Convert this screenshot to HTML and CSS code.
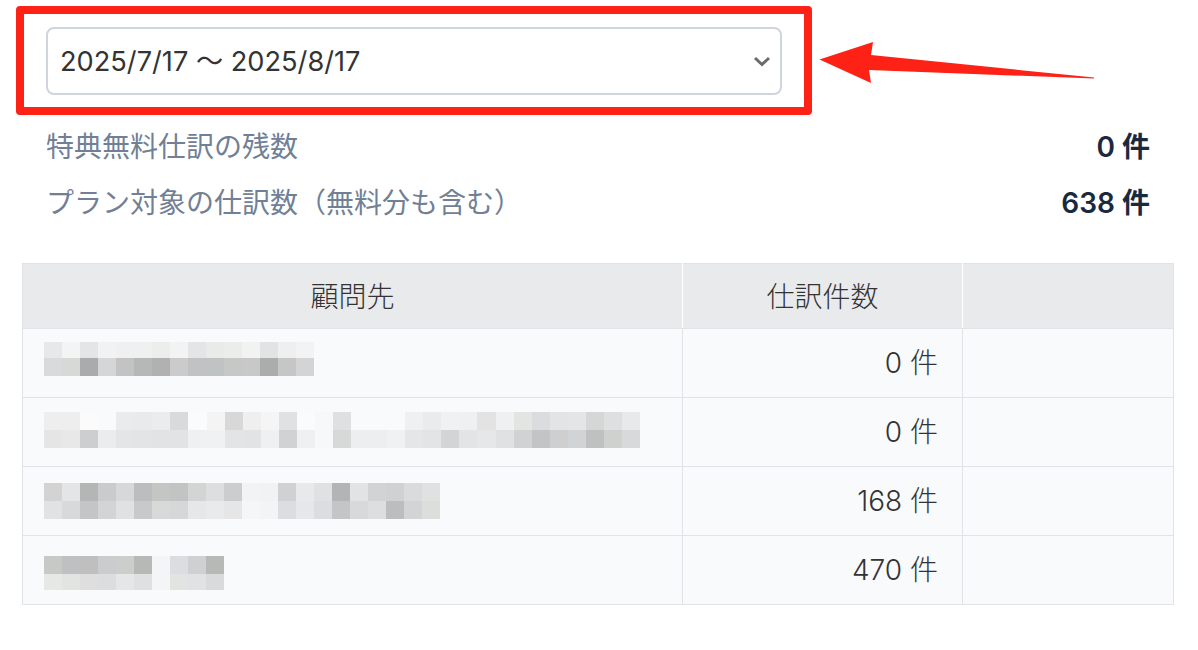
FILE: index.html
```html
<!DOCTYPE html>
<html lang="ja">
<head>
  <meta charset="UTF-8" />
  <meta name="viewport" content="width=device-width, initial-scale=1.0"/>
  <title>仕訳数</title>
  <link rel="stylesheet" href="styles.css">
</head>
<body>
  <div class="page">
    <div class="period">
      <select class="period-select">
        <option>2025/7/17 〜 2025/8/17</option>
      </select>
      <svg class="chevron" width="18" height="12" viewBox="0 0 18 12">
        <path d="M2 3 L9 9.5 L16 3" fill="none" stroke="#6b6b6b" stroke-width="3"/>
      </svg>
    </div>

    <div class="stats">
      <div class="stat">
        <span class="stat-label">特典無料仕訳の残数</span>
        <span class="stat-value">0 件</span>
      </div>
      <div class="stat">
        <span class="stat-label">プラン対象の仕訳数（無料分も含む）</span>
        <span class="stat-value">638 件</span>
      </div>
    </div>

    <table class="clients">
      <thead>
        <tr>
          <th class="col-name">顧問先</th>
          <th class="col-count">仕訳件数</th>
          <th></th>
        </tr>
      </thead>
      <tbody>
        <tr>
          <td class="name-cell">
            <svg class="mosaic mosaic-first" width="270" height="34" viewBox="0 0.11 15 1.89" preserveAspectRatio="none" shape-rendering="crispEdges">
              <rect x="0" y="0" width="1" height="1" fill="#e8e8e9"/><rect x="1" y="0" width="1" height="1" fill="#f4f4f5"/><rect x="2" y="0" width="1" height="1" fill="#e4e5e7"/><rect x="3" y="0" width="1" height="1" fill="#f2f2f3"/><rect x="4" y="0" width="1" height="1" fill="#f0f0f1"/><rect x="5" y="0" width="1" height="1" fill="#f0f0f1"/><rect x="6" y="0" width="1" height="1" fill="#eceeec"/><rect x="7" y="0" width="1" height="1" fill="#f3f3f4"/><rect x="8" y="0" width="1" height="1" fill="#e4e5e7"/><rect x="9" y="0" width="1" height="1" fill="#e9ebe9"/><rect x="10" y="0" width="1" height="1" fill="#ebedeb"/><rect x="11" y="0" width="1" height="1" fill="#f2f2f3"/><rect x="12" y="0" width="1" height="1" fill="#e2e3e5"/><rect x="13" y="0" width="1" height="1" fill="#efeff0"/><rect x="14" y="0" width="1" height="1" fill="#f3f3f4"/>
              <rect x="0" y="1" width="1" height="1" fill="#d9dadc"/><rect x="1" y="1" width="1" height="1" fill="#d6d9d6"/><rect x="2" y="1" width="1" height="1" fill="#a9abad"/><rect x="3" y="1" width="1" height="1" fill="#d5d6d8"/><rect x="4" y="1" width="1" height="1" fill="#c3c3c3"/><rect x="5" y="1" width="1" height="1" fill="#b5b8b7"/><rect x="6" y="1" width="1" height="1" fill="#b0b1b0"/><rect x="7" y="1" width="1" height="1" fill="#cbcbcb"/><rect x="8" y="1" width="1" height="1" fill="#c0c2c3"/><rect x="9" y="1" width="1" height="1" fill="#c0c3c3"/><rect x="10" y="1" width="1" height="1" fill="#c6c7c7"/><rect x="11" y="1" width="1" height="1" fill="#c8c8c8"/><rect x="12" y="1" width="1" height="1" fill="#abadac"/><rect x="13" y="1" width="1" height="1" fill="#c6c6c6"/><rect x="14" y="1" width="1" height="1" fill="#d3d4d6"/>
            </svg>
          </td>
          <td class="count">0 件</td>
          <td></td>
        </tr>
        <tr>
          <td class="name-cell">
            <svg class="mosaic mosaic-second" width="596" height="36" viewBox="0 0 33 2" preserveAspectRatio="none" shape-rendering="crispEdges">
              <rect x="0" y="0" width="1" height="1" fill="#eeeeef"/><rect x="1" y="0" width="1" height="1" fill="#eeeeef"/><rect x="2" y="0" width="1" height="1" fill="#fbfbfc"/><rect x="3" y="0" width="1" height="1" fill="#f9fafb"/><rect x="4" y="0" width="1" height="1" fill="#eaebec"/><rect x="5" y="0" width="1" height="1" fill="#e9eaeb"/><rect x="6" y="0" width="1" height="1" fill="#ebecec"/><rect x="7" y="0" width="1" height="1" fill="#d9dadc"/><rect x="8" y="0" width="1" height="1" fill="#fafbfc"/><rect x="9" y="0" width="1" height="1" fill="#f4f4f5"/><rect x="10" y="0" width="1" height="1" fill="#d8d8d8"/><rect x="11" y="0" width="1" height="1" fill="#efeff0"/><rect x="12" y="0" width="1" height="1" fill="#f5f5f6"/><rect x="13" y="0" width="1" height="1" fill="#e0e1e3"/><rect x="14" y="0" width="1" height="1" fill="#fafbfc"/><rect x="15" y="0" width="1" height="1" fill="#f7f8f9"/><rect x="16" y="0" width="1" height="1" fill="#dfe0e2"/><rect x="17" y="0" width="1" height="1" fill="#f9fafb"/><rect x="18" y="0" width="1" height="1" fill="#f9fafb"/><rect x="19" y="0" width="1" height="1" fill="#f9fafb"/><rect x="20" y="0" width="1" height="1" fill="#f0f0f1"/><rect x="21" y="0" width="1" height="1" fill="#eaebec"/><rect x="22" y="0" width="1" height="1" fill="#f0f1f2"/><rect x="23" y="0" width="1" height="1" fill="#eff0f1"/><rect x="24" y="0" width="1" height="1" fill="#e3e3e3"/><rect x="25" y="0" width="1" height="1" fill="#eff0f1"/><rect x="26" y="0" width="1" height="1" fill="#e3e5e3"/><rect x="27" y="0" width="1" height="1" fill="#dbdcde"/><rect x="28" y="0" width="1" height="1" fill="#e3e4e5"/><rect x="29" y="0" width="1" height="1" fill="#e4e5e6"/><rect x="30" y="0" width="1" height="1" fill="#d5d6d6"/><rect x="31" y="0" width="1" height="1" fill="#dedfe1"/><rect x="32" y="0" width="1" height="1" fill="#e8e9ea"/>
              <rect x="0" y="1" width="1" height="1" fill="#e5e5e6"/><rect x="1" y="1" width="1" height="1" fill="#e8e8e8"/><rect x="2" y="1" width="1" height="1" fill="#cdced0"/><rect x="3" y="1" width="1" height="1" fill="#ebecee"/><rect x="4" y="1" width="1" height="1" fill="#e4e5e7"/><rect x="5" y="1" width="1" height="1" fill="#e3e4e6"/><rect x="6" y="1" width="1" height="1" fill="#e2e3e5"/><rect x="7" y="1" width="1" height="1" fill="#e2e3e5"/><rect x="8" y="1" width="1" height="1" fill="#eff0f2"/><rect x="9" y="1" width="1" height="1" fill="#f0f1f3"/><rect x="10" y="1" width="1" height="1" fill="#e3e4e6"/><rect x="11" y="1" width="1" height="1" fill="#e2e3e5"/><rect x="12" y="1" width="1" height="1" fill="#eff0f2"/><rect x="13" y="1" width="1" height="1" fill="#d1d2d4"/><rect x="14" y="1" width="1" height="1" fill="#eff0f2"/><rect x="15" y="1" width="1" height="1" fill="#f7f8f9"/><rect x="16" y="1" width="1" height="1" fill="#d6d9d7"/><rect x="17" y="1" width="1" height="1" fill="#edeeef"/><rect x="18" y="1" width="1" height="1" fill="#edeeef"/><rect x="19" y="1" width="1" height="1" fill="#f0f1f2"/><rect x="20" y="1" width="1" height="1" fill="#e5e6e8"/><rect x="21" y="1" width="1" height="1" fill="#e3e4e6"/><rect x="22" y="1" width="1" height="1" fill="#d3d4d6"/><rect x="23" y="1" width="1" height="1" fill="#e3e4e6"/><rect x="24" y="1" width="1" height="1" fill="#e6e7e9"/><rect x="25" y="1" width="1" height="1" fill="#e0e1e3"/><rect x="26" y="1" width="1" height="1" fill="#d1d2d4"/><rect x="27" y="1" width="1" height="1" fill="#c3c4c6"/><rect x="28" y="1" width="1" height="1" fill="#cfcfcf"/><rect x="29" y="1" width="1" height="1" fill="#d2d3d5"/><rect x="30" y="1" width="1" height="1" fill="#bfc0c0"/><rect x="31" y="1" width="1" height="1" fill="#cfd1cf"/><rect x="32" y="1" width="1" height="1" fill="#d8d9db"/>
            </svg>
          </td>
          <td class="count">0 件</td>
          <td></td>
        </tr>
        <tr>
          <td class="name-cell">
            <svg class="mosaic" width="396" height="36" viewBox="0 0 22 2" preserveAspectRatio="none" shape-rendering="crispEdges">
              <rect x="0" y="0" width="1" height="1" fill="#d3d3d3"/><rect x="1" y="0" width="1" height="1" fill="#e4e5e7"/><rect x="2" y="0" width="1" height="1" fill="#b3b6b4"/><rect x="3" y="0" width="1" height="1" fill="#c9cbcd"/><rect x="4" y="0" width="1" height="1" fill="#d7d8da"/><rect x="5" y="0" width="1" height="1" fill="#bbbdbf"/><rect x="6" y="0" width="1" height="1" fill="#c3c6c3"/><rect x="7" y="0" width="1" height="1" fill="#c3c3c3"/><rect x="8" y="0" width="1" height="1" fill="#d3d4d4"/><rect x="9" y="0" width="1" height="1" fill="#dddee0"/><rect x="10" y="0" width="1" height="1" fill="#cccdcf"/><rect x="11" y="0" width="1" height="1" fill="#f2f3f4"/><rect x="12" y="0" width="1" height="1" fill="#f1f2f3"/><rect x="13" y="0" width="1" height="1" fill="#d0d1d3"/><rect x="14" y="0" width="1" height="1" fill="#e8e9eb"/><rect x="15" y="0" width="1" height="1" fill="#e0e1e3"/><rect x="16" y="0" width="1" height="1" fill="#b3b4b6"/><rect x="17" y="0" width="1" height="1" fill="#e2e3e5"/><rect x="18" y="0" width="1" height="1" fill="#d2d3d5"/><rect x="19" y="0" width="1" height="1" fill="#d0d1d3"/><rect x="20" y="0" width="1" height="1" fill="#dadbdd"/><rect x="21" y="0" width="1" height="1" fill="#e0e2e2"/>
              <rect x="0" y="1" width="1" height="1" fill="#e1e2e4"/><rect x="1" y="1" width="1" height="1" fill="#d8d9db"/><rect x="2" y="1" width="1" height="1" fill="#c3c5c7"/><rect x="3" y="1" width="1" height="1" fill="#d3d4d6"/><rect x="4" y="1" width="1" height="1" fill="#e0e1e3"/><rect x="5" y="1" width="1" height="1" fill="#c8c9cb"/><rect x="6" y="1" width="1" height="1" fill="#d9d9d9"/><rect x="7" y="1" width="1" height="1" fill="#d6d7d9"/><rect x="8" y="1" width="1" height="1" fill="#e6e7e9"/><rect x="9" y="1" width="1" height="1" fill="#e9eaec"/><rect x="10" y="1" width="1" height="1" fill="#e6e6e6"/><rect x="11" y="1" width="1" height="1" fill="#f5f6f7"/><rect x="12" y="1" width="1" height="1" fill="#f3f4f5"/><rect x="13" y="1" width="1" height="1" fill="#dcdde0"/><rect x="14" y="1" width="1" height="1" fill="#e6e7e9"/><rect x="15" y="1" width="1" height="1" fill="#dcdde0"/><rect x="16" y="1" width="1" height="1" fill="#c4c5c7"/><rect x="17" y="1" width="1" height="1" fill="#d8d9db"/><rect x="18" y="1" width="1" height="1" fill="#dddee0"/><rect x="19" y="1" width="1" height="1" fill="#bcbdbf"/><rect x="20" y="1" width="1" height="1" fill="#d3d4d6"/><rect x="21" y="1" width="1" height="1" fill="#dcdedc"/>
            </svg>
          </td>
          <td class="count">168 件</td>
          <td></td>
        </tr>
        <tr>
          <td class="name-cell">
            <svg class="mosaic mosaic-fourth" width="180" height="34" viewBox="0 0 10 1.89" preserveAspectRatio="none" shape-rendering="crispEdges">
              <rect x="0" y="0" width="1" height="1" fill="#c7c9c7"/><rect x="1" y="0" width="1" height="1" fill="#bfc0c2"/><rect x="2" y="0" width="1" height="1" fill="#bfbfbf"/><rect x="3" y="0" width="1" height="1" fill="#cbccce"/><rect x="4" y="0" width="1" height="1" fill="#ccceCc"/><rect x="5" y="0" width="1" height="1" fill="#b7b9b7"/><rect x="6" y="0" width="1" height="1" fill="#f4f5f6"/><rect x="7" y="0" width="1" height="1" fill="#dcdde0"/><rect x="8" y="0" width="1" height="1" fill="#cfd0d2"/><rect x="9" y="0" width="1" height="1" fill="#b7b9b7"/>
              <rect x="0" y="1" width="1" height="1" fill="#e6e8e6"/><rect x="1" y="1" width="1" height="1" fill="#e2e4e2"/><rect x="2" y="1" width="1" height="1" fill="#dededf"/><rect x="3" y="1" width="1" height="1" fill="#dcdddf"/><rect x="4" y="1" width="1" height="1" fill="#e5e6e7"/><rect x="5" y="1" width="1" height="1" fill="#dfe0e2"/><rect x="6" y="1" width="1" height="1" fill="#f4f5f6"/><rect x="7" y="1" width="1" height="1" fill="#e2e4e2"/><rect x="8" y="1" width="1" height="1" fill="#e1e2e3"/><rect x="9" y="1" width="1" height="1" fill="#d9dadc"/>
            </svg>
          </td>
          <td class="count">470 件</td>
          <td></td>
        </tr>
      </tbody>
    </table>
  </div>

  <!-- Annotation over the page -->
  <div class="callout-box"></div>
  <svg class="callout-arrow" width="300" height="60" viewBox="810 35 300 60">
    <polygon points="819.5,59.5 873,42 871,55 1094,77.5 1094,78.5 869,70 871,83" fill="#fe2116"/>
  </svg>
</body>
</html>
```

FILE: styles.css
```css
* {
  box-sizing: border-box;
}

body {
  margin: 0;
  background: #fff;
  color: #333;
  font-family: Inter, "Noto Sans CJK JP", sans-serif;
  font-size: 28px;
  font-weight: 300;
}

.page {
  padding: 27px 24px 0 22px;
}

.period {
  position: relative;
  margin: 0 392px 0 24px;
}

.period-select {
  display: block;
  width: 736px;
  height: 68px;
  padding: 0 12px;
  border: 2px solid #cfd4e0;
  border-radius: 8px;
  background: #fff;
  color: #333;
  font: inherit;
  font-size: 27.2px;
  font-weight: 400;
  appearance: none;
}

.chevron {
  position: absolute;
  top: 28px;
  left: 707px;
}

.stats {
  display: flex;
  flex-direction: column;
  gap: 16px;
  padding: 30px 24px 0 24px;
}

.stat {
  display: flex;
  justify-content: space-between;
  align-items: center;
  height: 40px;
}

.stat-label {
  color: #718096;
  font-weight: 400;
}

.stat-value {
  color: #1a2a3e;
  font-weight: 600;
}

.clients {
  width: 1152px;
  margin-top: 42px;
  border-collapse: collapse;
  table-layout: fixed;
}

.clients th {
  height: 65px;
  padding: 0 0 3px;
  border: 1px solid #e2e3e7;
  border-left-color: #fff;
  border-right-color: #fff;
  background: #e9eaec;
  font-weight: 300;
}

.clients th:first-child {
  border-left-color: #e2e3e7;
}

.clients th:last-child {
  border-right-color: #e2e3e7;
}

.clients td {
  height: 69px;
  padding: 0;
  border: 1px solid #e2e3e7;
  background: #f9fafb;
}

.col-name {
  width: 660px;
}

.col-count {
  width: 280px;
}

.clients .name-cell {
  padding-left: 21px;
}

.mosaic {
  display: block;
}

.mosaic-first {
  margin-bottom: 9px;
}

.mosaic-second {
  margin-bottom: 5px;
}

.mosaic-fourth {
  margin-top: 5px;
}

.clients .count {
  padding: 0 24px 4px 0;
  text-align: right;
}

.callout-box {
  position: absolute;
  top: 6px;
  left: 16px;
  width: 796px;
  height: 109px;
  border: 8px solid #fe2116;
  border-radius: 4px;
}

.callout-arrow {
  position: absolute;
  top: 35px;
  left: 810px;
}
```
